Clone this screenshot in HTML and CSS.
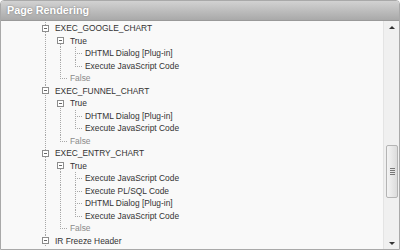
FILE: index.html
```html
<!DOCTYPE html>
<html lang="en">
<head>
    <meta charset="UTF-8">
    <title>Page Rendering</title>
    <link rel="stylesheet" href="styles.css">
</head>
<body>

    <!-- Page Rendering tree panel -->
    <div class="panel">
        <div class="panel-header">Page Rendering</div>
        <div class="panel-body">
            <div class="tree">
                <div class="row"><span class="g box-full"><i class="box"></i></span><span class="label">EXEC_GOOGLE_CHART</span></div>
                <div class="row"><span class="g pipe"></span><span class="g box-down"><i class="box"></i></span><span class="label">True</span></div>
                <div class="row"><span class="g pipe"></span><span class="g pipe"></span><span class="g tee"></span><span class="label">DHTML Dialog [Plug-in]</span></div>
                <div class="row"><span class="g pipe"></span><span class="g pipe"></span><span class="g elbow"></span><span class="label">Execute JavaScript Code</span></div>
                <div class="row"><span class="g pipe"></span><span class="g elbow"></span><span class="label muted">False</span></div>

                <div class="row"><span class="g box-full"><i class="box"></i></span><span class="label">EXEC_FUNNEL_CHART</span></div>
                <div class="row"><span class="g pipe"></span><span class="g box-down"><i class="box"></i></span><span class="label">True</span></div>
                <div class="row"><span class="g pipe"></span><span class="g pipe"></span><span class="g tee"></span><span class="label">DHTML Dialog [Plug-in]</span></div>
                <div class="row"><span class="g pipe"></span><span class="g pipe"></span><span class="g elbow"></span><span class="label">Execute JavaScript Code</span></div>
                <div class="row"><span class="g pipe"></span><span class="g elbow"></span><span class="label muted">False</span></div>

                <div class="row"><span class="g box-full"><i class="box"></i></span><span class="label">EXEC_ENTRY_CHART</span></div>
                <div class="row"><span class="g pipe"></span><span class="g box-down"><i class="box"></i></span><span class="label">True</span></div>
                <div class="row"><span class="g pipe"></span><span class="g pipe"></span><span class="g tee"></span><span class="label">Execute JavaScript Code</span></div>
                <div class="row"><span class="g pipe"></span><span class="g pipe"></span><span class="g tee"></span><span class="label">Execute PL/SQL Code</span></div>
                <div class="row"><span class="g pipe"></span><span class="g pipe"></span><span class="g tee"></span><span class="label">DHTML Dialog [Plug-in]</span></div>
                <div class="row"><span class="g pipe"></span><span class="g pipe"></span><span class="g elbow"></span><span class="label">Execute JavaScript Code</span></div>
                <div class="row"><span class="g pipe"></span><span class="g elbow"></span><span class="label muted">False</span></div>

                <div class="row"><span class="g box-full"><i class="box"></i></span><span class="label">IR Freeze Header</span></div>
            </div>

            <!-- fake scrollbar -->
            <div class="scrollbar">
                <div class="arrow up"></div>
                <div class="track">
                    <div class="thumb"><i></i><i></i><i></i><i></i></div>
                </div>
                <div class="arrow down"></div>
            </div>
        </div>
    </div>

</body>
</html>
```

FILE: styles.css
```css
body {
    margin: 0;
    background: #fff;
    font-family: "Liberation Sans", Arial, sans-serif;
}

/* Panel */
.panel {
    width: 400px;
    height: 250px;
    box-sizing: border-box;
    border: 1px solid #a9a9a9;
    border-radius: 4px 4px 0 0;
    display: flex;
    flex-direction: column;
    overflow: hidden;
    background: #f9f9f9;
}

.panel-header {
    height: 19px;
    flex: none;
    border-bottom: 1px solid #9a9a9a;
    background: linear-gradient(to bottom, #d2d2d2, #a9a9a9);
    color: #fff;
    font-weight: bold;
    font-size: 10.8px;
    line-height: 19px;
    padding-left: 6px;
    text-shadow: 0 0 2px #777;
}

.panel-body {
    flex: 1;
    display: flex;
    min-height: 0;
}

/* Tree */
.tree {
    flex: 1;
    padding: 1px 0 0 37px;
    overflow: hidden;
}

.row {
    display: flex;
    align-items: center;
    height: 12.5px;
}

.g {
    flex: none;
    width: 15px;
    height: 100%;
    display: flex;
    align-items: center;
    justify-content: center;
}

.pipe,
.box-full {
    background: repeating-linear-gradient(to bottom, #a8a8a8 0 1px, transparent 1px 2px) 7px 0 / 1px 100% no-repeat;
}

.tee {
    background:
        repeating-linear-gradient(to bottom, #a8a8a8 0 1px, transparent 1px 2px) 7px 0 / 1px 100% no-repeat,
        repeating-linear-gradient(to right, #a8a8a8 0 1px, transparent 1px 2px) 9px 6px / 5px 1px no-repeat;
}

.elbow {
    background:
        repeating-linear-gradient(to bottom, #a8a8a8 0 1px, transparent 1px 2px) 7px 0 / 1px 7px no-repeat,
        repeating-linear-gradient(to right, #a8a8a8 0 1px, transparent 1px 2px) 9px 6px / 5px 1px no-repeat;
}

.box-down {
    background: repeating-linear-gradient(to bottom, #a8a8a8 0 1px, transparent 1px 2px) 7px 7px / 1px 6px no-repeat;
}

.box {
    width: 5px;
    height: 5px;
    border: 1px solid #8c8c8c;
    background: #fff linear-gradient(#666, #666) center / 3px 1px no-repeat;
}

.label {
    margin-left: 2px;
    font-size: 8.4px;
    line-height: 12.5px;
    color: #333;
    white-space: nowrap;
}

.label.muted {
    color: #8a8a8a;
}

/* Scrollbar */
.scrollbar {
    flex: none;
    width: 15px;
    display: flex;
    flex-direction: column;
    background: #f0f0f0;
    border-left: 1px solid #e4e4e4;
}

.arrow {
    height: 12px;
    flex: none;
    display: flex;
    align-items: center;
    justify-content: center;
}

.arrow::after {
    content: "";
    border-left: 3px solid transparent;
    border-right: 3px solid transparent;
}

.arrow.up::after {
    border-bottom: 3px solid #333;
}

.arrow.down::after {
    border-top: 3px solid #333;
}

.track {
    flex: 1;
    padding-top: 112px;
}

.thumb {
    height: 51px;
    margin: 0 1px 0 2px;
    border: 1px solid #b4b4b4;
    border-radius: 2px;
    background: linear-gradient(to right, #f4f4f4, #dcdcdc);
    display: flex;
    flex-direction: column;
    align-items: center;
    justify-content: center;
    gap: 1px;
}

.thumb i {
    width: 5px;
    height: 1px;
    background: #777;
}
```
